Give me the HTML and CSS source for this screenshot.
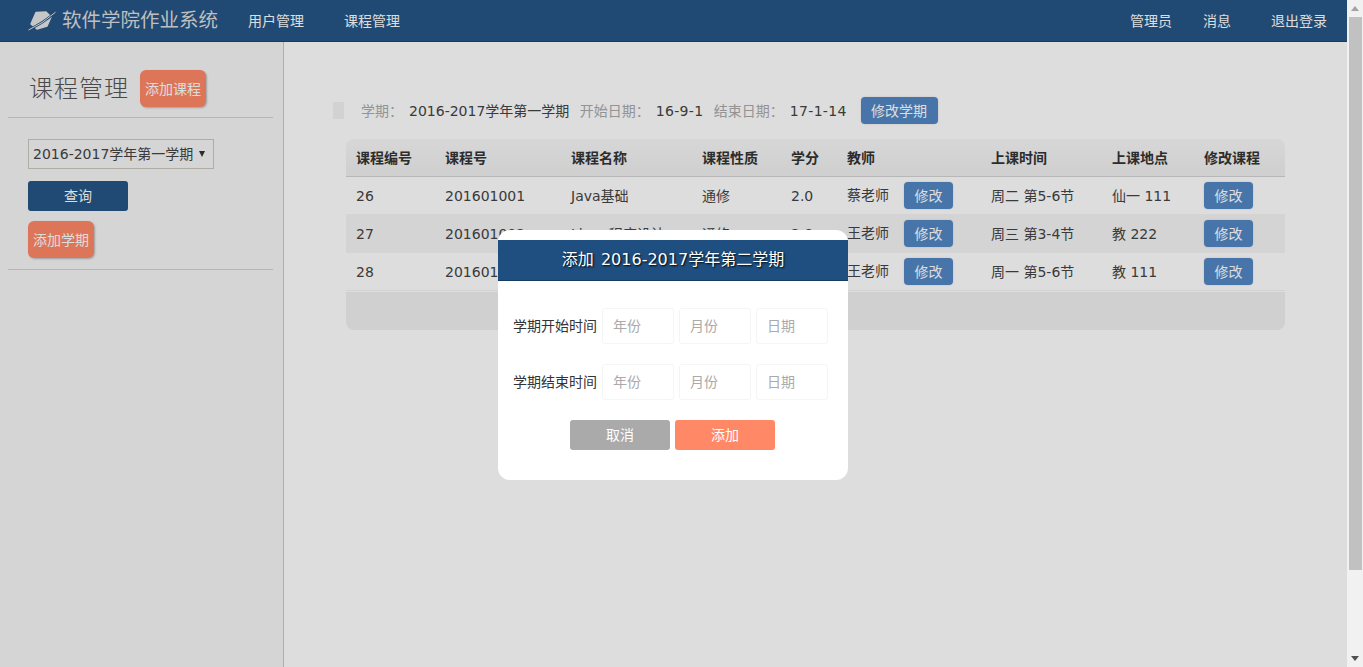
FILE: index.html
```html
<!DOCTYPE html>
<html lang="zh-CN">
<head>
  <meta charset="UTF-8">
  <title>软件学院作业系统</title>
  <link rel="stylesheet" href="styles.css">
</head>
<body>
  <div class="page">
    <div class="topbar">
      <a class="brand">
        <svg class="logo" width="28" height="22" viewBox="0 0 28 22">
          <path d="M8 2.5 L18 2 L23 7 L19 16 L9 19 L3 14 Z" fill="#e6e6e6" stroke="#e6e6e6" stroke-width="1.5" stroke-linejoin="round"/>
          <path d="M0 20 Q14 14 28 2" fill="none" stroke="#255585" stroke-width="2.4"/>
          <path d="M0.5 20 Q14 14 27.5 2.2" fill="none" stroke="#e6e6e6" stroke-width="1"/>
        </svg>
        <span>软件学院作业系统</span>
      </a>
      <a class="nav-link">用户管理</a>
      <a class="nav-link">课程管理</a>
      <div class="nav-right">
        <a>管理员</a>
        <a>消息</a>
        <a>退出登录</a>
      </div>
    </div>
    <div class="main">
      <div class="sidebar">
        <div class="side-head">
          <h2>课程管理</h2>
          <button class="btn-orange">添加课程</button>
        </div>
        <div class="side-body">
          <div class="fake-select">2016-2017学年第一学期<i></i></div>
          <button class="btn-query">查询</button>
          <button class="btn-orange">添加学期</button>
        </div>
      </div>
      <div class="content">
        <div class="term-info">
          <span class="marker"></span>
          <span class="lbl first">学期：</span><span class="val">2016-2017学年第一学期</span>
          <span class="lbl">开始日期：</span><span class="val date">16-9-1</span>
          <span class="lbl">结束日期：</span><span class="val date">17-1-14</span>
          <button class="btn-blue term-btn">修改学期</button>
        </div>
        <div class="table-wrap">
          <table>
            <colgroup>
              <col class="c1"><col class="c2"><col class="c3"><col class="c4"><col class="c5">
              <col class="c6"><col class="c7"><col class="c8"><col class="c9">
            </colgroup>
            <thead>
              <tr><th>课程编号</th><th>课程号</th><th>课程名称</th><th>课程性质</th><th>学分</th><th>教师</th><th>上课时间</th><th>上课地点</th><th>修改课程</th></tr>
            </thead>
            <tbody>
              <tr>
                <td>26</td><td>201601001</td><td>Java基础</td><td>通修</td><td>2.0</td>
                <td><span class="teacher">蔡老师</span><button class="btn-blue">修改</button></td>
                <td>周二 第5-6节</td><td>仙一 111</td><td><button class="btn-blue">修改</button></td>
              </tr>
              <tr>
                <td>27</td><td>201601002</td><td>Linux程序设计</td><td>通修</td><td>2.0</td>
                <td><span class="teacher">王老师</span><button class="btn-blue">修改</button></td>
                <td>周三 第3-4节</td><td>教 222</td><td><button class="btn-blue">修改</button></td>
              </tr>
              <tr>
                <td>28</td><td>201601003</td><td>数据结构</td><td>通修</td><td>2.0</td>
                <td><span class="teacher">王老师</span><button class="btn-blue">修改</button></td>
                <td>周一 第5-6节</td><td>教 111</td><td><button class="btn-blue">修改</button></td>
              </tr>
            </tbody>
          </table>
          <div class="table-foot"></div>
        </div>
      </div>
    </div>

    <div class="mask">
      <div class="dialog">
        <div class="dialog-title">添加 2016-2017学年第二学期</div>
        <div class="form-row">
          <label>学期开始时间</label>
          <input type="text" placeholder="年份">
          <input type="text" placeholder="月份">
          <input type="text" placeholder="日期">
        </div>
        <div class="form-row">
          <label>学期结束时间</label>
          <input type="text" placeholder="年份">
          <input type="text" placeholder="月份">
          <input type="text" placeholder="日期">
        </div>
        <div class="dialog-btns">
          <button class="btn-cancel">取消</button>
          <button class="btn-add">添加</button>
        </div>
      </div>
    </div>
  </div>
  <div class="scrollbar">
    <span class="arrow up"></span>
    <span class="thumb"></span>
    <span class="arrow down"></span>
  </div>
</body>
</html>
```

FILE: styles.css
```css
* { box-sizing: border-box; }
html, body { height: 100%; }
body { margin: 0; display: flex; overflow: hidden; font-family: "DejaVu Sans", "Noto Sans CJK SC", sans-serif; font-size: 14px; line-height: 20px; color: #444; background: #fff; }
button { font: inherit; border: none; cursor: pointer; color: #fff; }

.page { position: relative; width: 1347px; height: 667px; display: flex; flex-direction: column; overflow: hidden; }

.topbar { height: 42px; flex: none; display: flex; align-items: center; padding: 0 20px 0 28px; background: #255585; border-bottom: 1px solid #1d4468; color: #fff; }
.brand { display: flex; align-items: center; width: 220px; font-size: 19.5px; color: #ddd; }
.logo { margin-right: 6px; }
.nav-link { width: 96px; }
.nav-right { margin-left: auto; display: flex; }
.nav-right a:nth-child(1) { margin-right: 31px; }
.nav-right a:nth-child(2) { margin-right: 40px; }

.main { flex: 1; display: flex; }
.sidebar { width: 284px; flex: none; padding: 0 10px 0 8px; background: #f6f6f6; border-right: 1px solid #c8c8c8; }
.side-head { display: flex; align-items: center; height: 76px; padding: 18px 0 0 21px; border-bottom: 1px solid #d4d4cc; }
.side-head h2 { margin: 0 11px 0 0; font-size: 24px; font-weight: 300; letter-spacing: 1px; color: #555; }
.side-body { display: flex; flex-direction: column; align-items: flex-start; padding: 21px 0 11px 20px; border-bottom: 1px solid #d4d4cc; }

.btn-orange { width: 66px; height: 37px; padding: 0; border-radius: 6px; background: #ff8866; box-shadow: 1px 1px 2px rgba(0, 0, 0, .25); }
.fake-select { display: flex; align-items: center; width: 186px; height: 30px; padding-left: 4px; border: 1px solid #c8c8bc; }
.fake-select i { margin-left: 6px; border-left: 3.5px solid transparent; border-right: 3.5px solid transparent; border-top: 6px solid #333; }
.btn-query { width: 100px; height: 30px; margin: 12px 0 10px; border-radius: 3px; background: #255585; }

.content { flex: 1; padding: 55px 62px 0 49px; background: #fff; }
.term-info { display: flex; align-items: center; height: 27px; margin-bottom: 15px; white-space: nowrap; }
.marker { width: 11px; height: 17px; margin-right: 17px; background: #f3f3f3; }
.lbl { margin-left: 10.5px; color: #aaa; }
.lbl.first { margin-left: 0; }
.val { margin-left: 6px; }
.val.date { letter-spacing: .3px; }
.btn-blue { width: 49px; height: 27px; padding: 0; border-radius: 4px; background: #5288c4; box-shadow: 0 0 2px rgba(0, 0, 0, .15); }
.term-btn { width: 77px; margin-left: 14px; }

.table-wrap { margin-left: 13px; border-radius: 8px; overflow: hidden; }
table { width: 939px; table-layout: fixed; border-collapse: separate; border-spacing: 0; }
.c1 { width: 89px; } .c2 { width: 126px; } .c3 { width: 131px; } .c4 { width: 89px; } .c5 { width: 56px; }
.c6 { width: 144px; } .c7 { width: 121px; } .c8 { width: 92px; } .c9 { width: 91px; }
th, td { padding: 0 0 0 10px; text-align: left; white-space: nowrap; }
th { height: 38px; font-weight: bold; color: #333; background: linear-gradient(#f8f8f8, #f0f0f0); border-bottom: 1px solid #d4d4d4; }
td { height: 38px; }
tbody tr:nth-child(1) td { height: 37px; }
tbody tr:nth-child(2) td { height: 39px; background: #f5f5f5; }
tbody tr:nth-child(3) td { border-bottom: 1px solid #f4f4f4; }
.teacher { display: inline-block; width: 57px; }
td .btn-blue { vertical-align: middle; }
.table-foot { height: 38px; margin-top: 1px; background: #f0f0f0; }

.mask { position: absolute; inset: 0; display: flex; justify-content: center; padding: 230px 1px 0 0; background: rgba(0, 0, 0, .133); }
.dialog { width: 350px; height: 250px; padding-top: 10px; border-radius: 12px; background: #fff; color: #333; }
.dialog-title { height: 41px; line-height: 40px; margin-bottom: 27px; text-align: center; font-size: 16px; word-spacing: 2px; color: #fff; background: #1f4f80; border-bottom: 1px solid #173c62; text-shadow: 1px 1px 2px #000; }
.form-row { display: flex; align-items: center; gap: 5px; height: 36px; margin-bottom: 20px; padding-left: 15px; }
.form-row label { width: 84px; }
.form-row input { width: 72px; height: 36px; padding: 0 10px; border: 1px solid #f5f5f5; border-radius: 3px; font: inherit; outline: none; }
.form-row input::placeholder { color: #aaa; }
.dialog-btns { display: flex; justify-content: center; gap: 5px; padding-right: 1px; }
.dialog-btns button { width: 100px; height: 30px; border-radius: 3px; }
.btn-cancel { background: #aaa; }
.btn-add { background: #ff8866; }

.scrollbar { position: relative; width: 16px; height: 667px; flex: none; background: #f1f1f1; }
.thumb { position: absolute; left: 2px; top: 17px; width: 13px; height: 553px; background: #c1c1c1; }
.arrow { position: absolute; left: 4px; border-left: 4px solid transparent; border-right: 4px solid transparent; }
.arrow.up { top: 6px; border-bottom: 5px solid #a3a3a3; }
.arrow.down { bottom: 6px; border-top: 5px solid #505050; }
```
